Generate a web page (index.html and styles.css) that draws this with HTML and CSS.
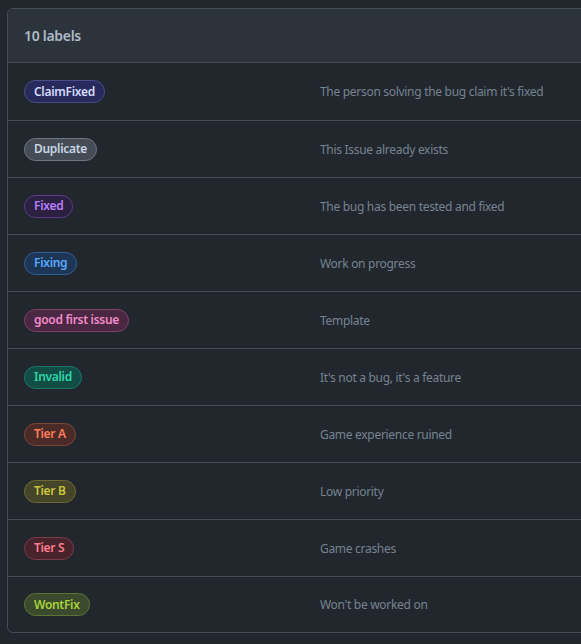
FILE: index.html
```html
<!DOCTYPE html>
<html>
<head>
<meta charset="utf-8">
<link rel="stylesheet" href="styles.css">
</head>
<body>
<div class="box">
  <div class="box-header">10 labels</div>
  <div class="row"><span class="label l-claim">ClaimFixed</span><span class="desc">The person solving the bug claim it's fixed</span></div>
  <div class="row"><span class="label l-dup">Duplicate</span><span class="desc">This Issue already exists</span></div>
  <div class="row"><span class="label l-fixed">Fixed</span><span class="desc">The bug has been tested and fixed</span></div>
  <div class="row"><span class="label l-fixing">Fixing</span><span class="desc">Work on progress</span></div>
  <div class="row"><span class="label l-gfi">good first issue</span><span class="desc">Template</span></div>
  <div class="row"><span class="label l-invalid">Invalid</span><span class="desc">It's not a bug, it's a feature</span></div>
  <div class="row"><span class="label l-tiera">Tier A</span><span class="desc">Game experience ruined</span></div>
  <div class="row"><span class="label l-tierb">Tier B</span><span class="desc">Low priority</span></div>
  <div class="row"><span class="label l-tiers">Tier S</span><span class="desc">Game crashes</span></div>
  <div class="row"><span class="label l-wont">WontFix</span><span class="desc">Won't be worked on</span></div>
</div>
</body>
</html>
```
FILE: styles.css
```css
html, body {
  margin: 0;
  padding: 0;
  background: #22272e;
  overflow: hidden;
}
body {
  padding: 8px 0 0 7px;
  font-family: "Noto Sans", "Open Sans", sans-serif;
  color: #adbac7;
  letter-spacing: -0.3px;
}
.box {
  width: 700px;
  border: 1px solid #444c56;
  border-radius: 6px;
  background: #22272e;
}
.box-header {
  height: 54px;
  box-sizing: border-box;
  padding: 0 16px;
  display: flex;
  align-items: center;
  background: #2d333b;
  border-bottom: 1px solid #444c56;
  border-radius: 6px 6px 0 0;
  font-size: 14px;
  font-weight: 600;
  color: #adbac7;
}
.row {
  display: grid;
  grid-template-columns: 296px 1fr;
  align-items: center;
  height: 56px;
  padding: 0 16px;
}
.row:nth-child(2) {
  height: 57px;
}
.row:last-child {
  height: 55px;
}
.row + .row {
  border-top: 1px solid #444c56;
}
.label {
  justify-self: start;
  display: inline-flex;
  align-items: center;
  height: 23px;
  box-sizing: border-box;
  padding: 0 9px;
  border: 1px solid;
  border-radius: 2em;
  font-size: 12px;
  font-weight: 600;
  line-height: 1;
}
.desc {
  font-size: 12px;
  color: #768390;
}
.l-claim { background: #272a5a; border-color: #4a4f8c; color: #d6dbff; }
.l-dup { background: #454c56; border-color: #6e7781; color: #c8d6e5; }
.l-fixed { background: #2c2040; border-color: #5b3b8c; color: #b87fff; }
.l-fixing { background: #1e3656; border-color: #30609a; color: #5aa8ff; }
.l-gfi { background: #4a2742; border-color: #7d4268; color: #f28bcb; }
.l-invalid { background: #114c45; border-color: #1b7868; color: #2fd6a9; }
.l-tiera { background: #4a2b28; border-color: #804638; color: #ff7d58; }
.l-tierb { background: #45452a; border-color: #6f6b32; color: #cbc43c; }
.l-tiers { background: #48232c; border-color: #7b3b47; color: #ff7d8c; }
.l-wont { background: #3b4a2c; border-color: #5d7435; color: #a6d43c; }
```
